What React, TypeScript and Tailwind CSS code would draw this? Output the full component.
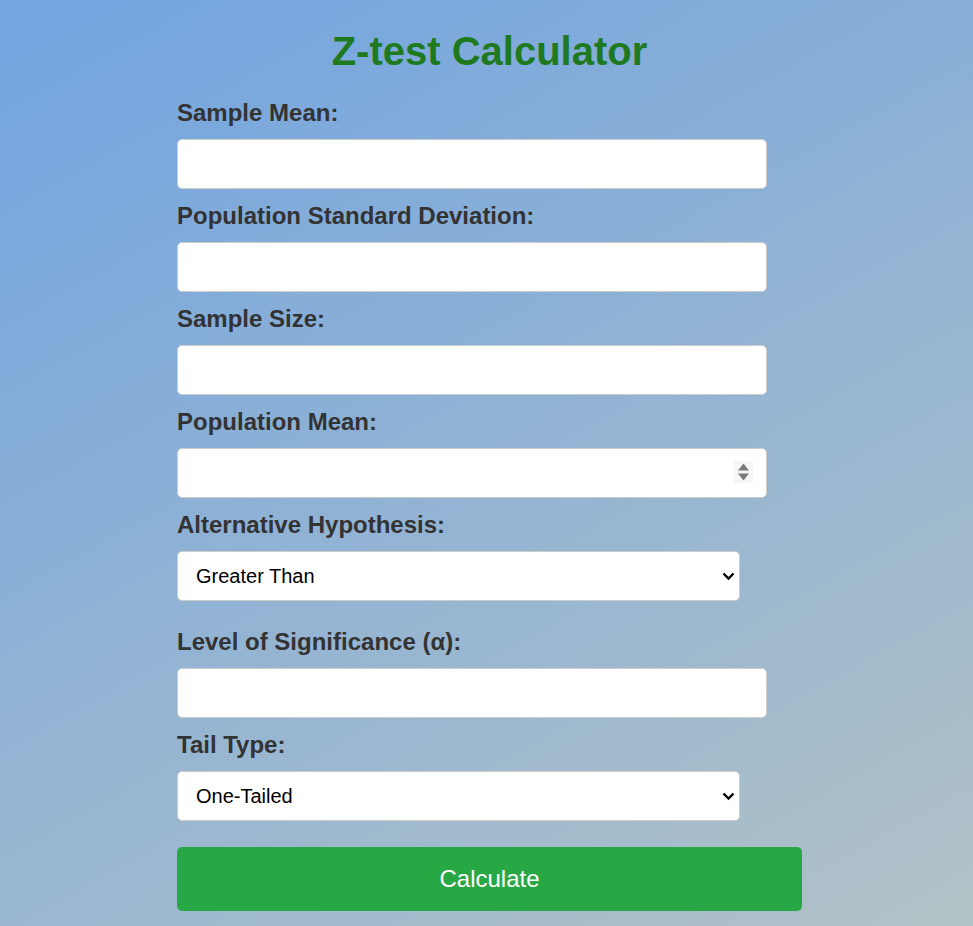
import React from "react";

function Label({ children }: { children: React.ReactNode }) {
  return (
    <label className="block text-[24px] font-bold leading-[28px] text-[#333333] mb-[12px]">
      {children}
    </label>
  );
}

function TextInput({ spinner = false }: { spinner?: boolean }) {
  return (
    <div className="relative w-[590px] h-[50px] mb-[13px]">
      <input
        type="text"
        className="block w-full h-full border border-[#cccccc] rounded-[5px] bg-white px-[12px] text-[20px] outline-none"
      />
      {spinner && (
        <div className="absolute right-[14px] top-[13px] w-[19px] h-[22px] bg-[#f6f6f6] flex items-center justify-center">
          <svg width="13" height="22" viewBox="0 0 13 22">
            <path d="M6.5 2.5 L12 9.5 L1 9.5 Z" fill="#7a7a7a" />
            <path d="M1 12.5 L12 12.5 L6.5 19.5 Z" fill="#7a7a7a" />
          </svg>
        </div>
      )}
    </div>
  );
}

function Select({ value, options, mb }: { value: string; options: string[]; mb: string }) {
  return (
    <div className={`relative w-[563px] h-[50px] ${mb}`}>
      <select
        defaultValue={value}
        className="appearance-none block w-full h-full border border-[#cccccc] rounded-[5px] bg-white pl-[18px] pr-[30px] text-[20px] text-black outline-none"
      >
        {options.map((o) => (
          <option key={o} value={o}>
            {o}
          </option>
        ))}
      </select>
      <svg
        className="pointer-events-none absolute right-[5px] top-[21px]"
        width="13"
        height="9"
        viewBox="0 0 13 9"
      >
        <path d="M1.5 1.5 L6.5 6.5 L11.5 1.5" fill="none" stroke="#000" strokeWidth="2.4" />
      </svg>
    </div>
  );
}

export default function App() {
  return (
    <div className="min-h-screen w-full bg-[linear-gradient(151deg,#71a4e1,#b2c2c6)] font-['Liberation_Sans',Arial,sans-serif]">
      <div className="pl-[177px] pt-[28px] pb-[15px]">
        <div className="w-[625px]">
          <h1 className="text-[40px] font-bold leading-[46px] text-[#1f7a1f] text-center mb-[25px]">
            Z-test Calculator
          </h1>
          <Label>Sample Mean:</Label>
          <TextInput />
          <Label>Population Standard Deviation:</Label>
          <TextInput />
          <Label>Sample Size:</Label>
          <TextInput />
          <Label>Population Mean:</Label>
          <TextInput spinner />
          <Label>Alternative Hypothesis:</Label>
          <Select value="Greater Than" options={["Greater Than", "Less Than", "Not Equal To"]} mb="mb-[27px]" />
          <Label>Level of Significance (α):</Label>
          <TextInput />
          <Label>Tail Type:</Label>
          <Select value="One-Tailed" options={["One-Tailed", "Two-Tailed"]} mb="mb-[26px]" />
          <button className="block w-[625px] h-[64px] bg-[#28a745] text-white text-[24px] rounded-[5px]">
            Calculate
          </button>
        </div>
      </div>
    </div>
  );
}
